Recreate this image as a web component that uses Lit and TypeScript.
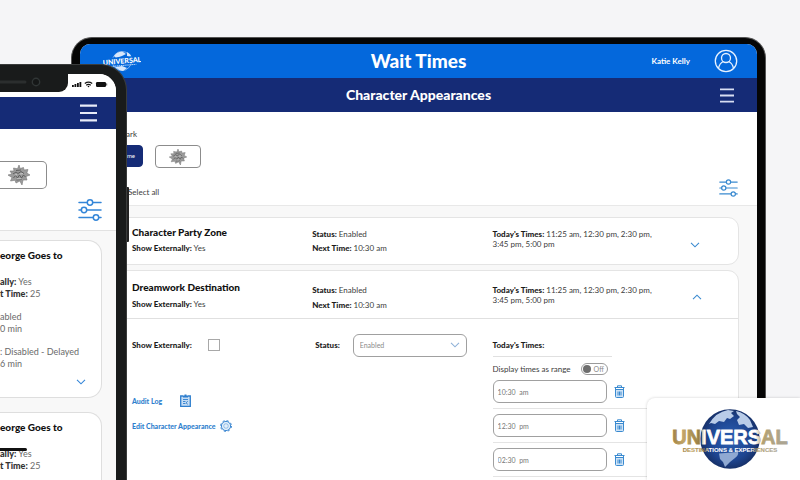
import { LitElement, html, svg, css } from "lit";
import { customElement } from "lit/decorators.js";

const chevronDown = svg`<svg viewBox="0 0 10 6" width="10" height="6" aria-hidden="true"><path d="M1 .8 5 4.8 9 .8" fill="none" stroke="currentColor" stroke-width="1.1"/></svg>`;
const chevronUp = svg`<svg viewBox="0 0 10 6" width="10" height="6" aria-hidden="true"><path d="M1 5.2 5 1.2 9 5.2" fill="none" stroke="currentColor" stroke-width="1.1"/></svg>`;

const sliders = (w: number, h: number) => html`<svg viewBox="0 0 24 22" width=${w} height=${h} aria-hidden="true">
  <g fill="none" stroke="currentColor" stroke-width="1.5" stroke-linecap="round">
    <path d="M1 3.5h8M15 3.5h8M1 11h2.500M9 11h14M1 18.500h14M21 18.500h2"/>
    <circle cx="12" cy="3.500" r="2.700"/><circle cx="6" cy="11" r="2.700"/><circle cx="18" cy="18.500" r="2.700"/>
  </g></svg>`;

const bars = (w: number, h: number) => html`<svg viewBox="0 0 17 17" width=${w} height=${h} preserveAspectRatio="none" aria-hidden="true">
  <path d="M0 1.500h17M0 8.500h17M0 15.500h17" stroke="currentColor" stroke-width="2"/></svg>`;

const parkMark = (w: number, h: number) => html`<svg viewBox="0 0 22 20" width=${w} height=${h} aria-hidden="true">
  <path d="M11 0 12.200 3.500 15.500 2.500 16 5 20 4.500 18.800 8 22 10 18 11.500 19 15 15 15 14 20 11.800 16 8 18 7 15.200 2.500 16 4 12.500 0 10 4 9 2 6 6 6 5.500 3 9.500 3.800z" fill="#9b9b9b" stroke="#777" stroke-width=".6"/>
  <path d="M5 9 8 7 10 8.500 13 6.500 16 8.500M5.500 13l2-2.500 2 2.500 2-3 2 3 2-3 2 2M8 5.500l5-.5M8.500 15l5-.5" fill="none" stroke="#585858" stroke-width=".9"/>
  <path d="M7 10 9 9.500M12 9l3-.5M9 13.800h4" fill="none" stroke="#d8d8d8" stroke-width=".7"/></svg>`;

const trash = html`<svg viewBox="0 0 11 13" width="11" height="13" aria-hidden="true">
  <path d="M1.500 4.500h8V12h-8z" fill="#cfe3f6"/>
  <path d="M.5 2.500h10M3.500 2.300V.8h4v1.500M1.500 3v8.500q0 1 1 1h6q1 0 1-1V3M1.500 4.500h8M4 6.500v4M5.500 6.500v4M7 6.500v4" fill="none" stroke="currentColor" stroke-width="1"/></svg>`;

const clipboard = html`<svg viewBox="0 0 11 13" width="11" height="13" aria-hidden="true">
  <path d="M.7 2h9.600v10.300H.7z" fill="#c6ddf4"/>
  <path d="M3 2H.7v10.300h9.600V2H8" fill="none" stroke="currentColor" stroke-width="1.300"/>
  <path d="M3 3.500V1.500h1.500V.4h2v1.100H8v2z" fill="currentColor"/>
  <path d="M3 5.500h5M3 7.500h2.500M3 9.500h2.500M7.800 7.200 6 8.800l1.800 1.500" fill="none" stroke="currentColor" stroke-width=".9"/></svg>`;

const gear = html`<svg viewBox="0 0 12 12" width="12" height="12" aria-hidden="true">
  <circle cx="6" cy="6" r="4.600" fill="#e3effa" stroke="currentColor" stroke-width=".9"/>
  <circle cx="6" cy="6" r="5.400" fill="none" stroke="currentColor" stroke-width="1" stroke-dasharray="2.120 2.120"/>
  <circle cx="6" cy="6" r="2.300" fill="none" stroke="currentColor" stroke-width=".7" opacity=".6"/></svg>`;

@customElement("tablet-view")
class TabletView extends LitElement {
  static styles = css`
    :host { display: block; background: #fff; color: #3c3c3c; font-size: 8px; line-height: 10px; }
    * { box-sizing: border-box; }
    h1, h2, h3, p { margin: 0; }
    b { font-weight: 900; color: #1c1c1c; }
    button { border: 0; padding: 0; background: none; font: inherit; color: #3a8ad0; display: flex; }
    .bar { display: grid; grid-template-columns: 1fr auto 1fr; align-items: center; height: 34px; padding: 0 19px; color: #fff; }
    .top { background: #0468dc; }
    .logo { margin-left: 4px; }
    .sub { background: #152b76; padding: 0 23px; }
    .top h1 { font-size: 19px; line-height: 24px; font-weight: 900; }
    .sub h2 { font-size: 14px; line-height: 20px; font-weight: 900; grid-column: 2; }
    .user { display: flex; align-items: center; justify-content: flex-end; gap: 24px; font-weight: 700; }
    .sub button { color: #d8def2; justify-self: end; }
    .filters { padding: 17px 19px 8px 48px; border-bottom: 1px solid #e8e8e8; height: 94px; }
    .filters > div:first-child { margin-left: -2px; }
    .parks { display: flex; gap: 12px; margin: 6px 0 0 -31px; }
    .park { height: 23px; width: 46px; border: 1px solid #8c8c8c; border-radius: 4px; align-items: center; justify-content: center; }
    .park.on { background: #152b76; border-color: #152b76; color: #fff; font-size: 6px; height: 22px; padding-left: 22px; }
    .row { display: flex; justify-content: space-between; align-items: end; margin-top: 11px; }
    .list { background: #f8f8f8; padding: 11px 18px 0 24px; }
    .card { background: #fff; border: 1px solid #e4e4e4; border-radius: 11px; margin-bottom: 5px; }
    .cols { display: grid; grid-template-columns: 3fr 3fr 4fr; padding: 0 5px 0 27px; }
    .head { height: 46px; padding-top: 8px; }
    .tall { height: 48px; padding-top: 10px; border-bottom: 1px solid #e0e0e0; }
    h3 { font-size: 10px; line-height: 12px; font-weight: 900; color: #111; margin-bottom: 5px; }
    .tall h3 { margin-bottom: 6px; }
    .pair { display: grid; gap: 4px; align-content: start; padding-top: 3px; }
    .tall .pair { gap: 5px; padding-top: 4px; }
    .times { display: flex; justify-content: space-between; padding: 3px 33px 0 0; }
    .tall .times { padding: 4px 31px 0 0; }
    .times p { width: 172px; }
    .times button { margin-top: 13px; align-self: start; }
    .tall .times button { margin-top: 9px; }
    .body { padding-top: 14px; height: 180px; }
    .field { display: flex; align-items: center; height: 24px; }
    .box { appearance: none; margin: 0 0 0 16px; width: 12px; height: 12px; border: 1px solid #a8a8a8; background: #fff; }
    .pick { position: relative; margin-left: 13px; display: flex; align-items: center; }
    select { appearance: none; font: inherit; font-size: 7px; width: 114px; height: 23px; border: 1px solid #a0a0a0; border-radius: 6px; background: #fff; color: #8a8a8a; padding: 0 6px; }
    .pick svg { position: absolute; right: 7px; color: #8fb2d8; }
    .links { display: grid; gap: 12px; margin-top: 37px; }
    .links a { color: #2f7fce; text-decoration: none; font-size: 7px; font-weight: 900; display: flex; align-items: center; gap: 4px; height: 13px; }
    .links .log { gap: 18px; }
    .status { padding-left: 3px; }
    .range { display: flex; align-items: center; gap: 10px; height: 24px; border-top: 1px solid #e0e0e0; width: 119px; white-space: nowrap; margin-top: -1px; }
    .switch { display: flex; align-items: center; gap: 3px; width: 27px; height: 12px; border: 1px solid #9a9a9a; border-radius: 6px; padding: 0 1px; color: #8a8a8a; font-size: 7px; flex: none; }
    .switch input { appearance: none; margin: 0; width: 8px; height: 8px; border-radius: 50%; background: #6e6e6e; }
    .slot { display: flex; align-items: center; gap: 7px; height: 34px; padding: 5px 0; border-bottom: 1px solid #e4e4e4; }
    .range + .slot { padding-top: 0; height: 29px; }
    .slot input { font: inherit; font-size: 7px; width: 114px; height: 23px; border: 1px solid #a0a0a0; border-radius: 6px; color: #777; padding: 0 4px; background: #fff; }
  `;

  private card(name: string, open: boolean) {
    return html`<div class="cols head ${open ? "tall" : ""}">
      <div><h3>${name}</h3><p><b>Show Externally:</b> Yes</p></div>
      <div class="pair"><p><b>Status:</b> Enabled</p><p><b>Next Time:</b> 10:30 am</p></div>
      <div class="times"><p><b>Today's Times:</b> 11:25 am, 12:30 pm, 2:30 pm, 3:45 pm, 5:00 pm</p>
        <button aria-label=${open ? "Collapse" : "Expand"}>${open ? chevronUp : chevronDown}</button></div>
    </div>`;
  }

  render() {
    return html`
      <header class="bar top">
        <svg class="logo" viewBox="0 0 38 24" width="38" height="24" role="img" aria-label="Universal">
          <circle cx="19" cy="12" r="9.500" fill="none" stroke="#9cc4f3" stroke-width=".8"/>
          <path d="M11 7Q15 2 20 3l3 2-4 2-6 2zM24 3q4 2 5 6l-5-2zM12 18l7-1 5 2-4 3q-5-1-8-4z" fill="#d6e7fb"/>
          <g transform="rotate(-5 19 12)"><rect x="1" y="8" width="36" height="7" fill="#0468dc"/>
          <text x="19" y="14.500" text-anchor="middle" font-family="Lato, sans-serif" font-weight="900" font-size="7" fill="#fff">UNIVERSAL</text>
          <path d="M5 16.500h28" stroke="#b9d6f7" stroke-width="1" stroke-dasharray="1.500 .6"/></g>
        </svg>
        <h1>Wait Times</h1>
        <div class="user"><span>Katie Kelly</span>
          <svg viewBox="0 0 24 24" width="24" height="24" aria-hidden="true"><g fill="none" stroke="#e6f1ff" stroke-width="1.300">
            <circle cx="12" cy="12" r="10.700"/><circle cx="12" cy="9" r="4.500"/><path d="M4.500 19.500q1-5.500 5-7M19.500 19.500q-1-5.500-5-7"/></g></svg>
        </div>
      </header>
      <div class="bar sub"><h2>Character Appearances</h2><button aria-label="Menu">${bars(14, 15)}</button></div>
      <section class="filters">
        <div>ark</div>
        <div class="parks"><button class="park on">me</button><button class="park" aria-label="Park">${parkMark(18, 16)}</button></div>
        <div class="row"><span>Select all</span><button aria-label="Filters">${sliders(19, 18)}</button></div>
      </section>
      <section class="list">
        <article class="card">${this.card("Character Party Zone", false)}</article>
        <article class="card">${this.card("Dreamwork Destination", true)}
          <div class="cols body">
            <div>
              <div class="field"><label for="show"><b>Show Externally:</b></label><input id="show" class="box" type="checkbox"></div>
              <div class="links"><a class="log" href="#log">Audit Log ${clipboard}</a><a href="#edit">Edit Character Appearance ${gear}</a></div>
            </div>
            <div><div class="field status"><label for="status"><b>Status:</b></label>
              <span class="pick"><select id="status"><option>Enabled</option></select>${chevronDown}</span></div></div>
            <div>
              <div class="field"><b>Today's Times:</b></div>
              <div class="range"><span>Display times as range</span><label class="switch"><input type="checkbox" aria-label="Display times as range">Off</label></div>
              ${["10:30  am", "12:30  pm", "02:30  pm"].map(t => html`<div class="slot"><input aria-label="Time" .value=${t}><button aria-label="Delete">${trash}</button></div>`)}
            </div>
          </div>
        </article>
      </section>`;
  }
}

@customElement("phone-view")
class PhoneView extends LitElement {
  static styles = css`
    :host { display: block; background: #f8f8f8; color: #6a6a6a; font-size: 9px; line-height: 12px; }
    * { box-sizing: border-box; }
    h3, p { margin: 0; }
    b { font-weight: 900; color: #333; }
    button { border: 0; padding: 0; background: none; color: #3486d8; display: flex; }
    .island { display: flex; height: 23px; background: #fff; }
    .notch { width: 68px; height: 18px; background: #191b1b; border-radius: 0 0 9px 0; }
    .signals { margin: 7px 0 0 4px; }
    .nav { background: #152b76; height: 32px; display: flex; justify-content: flex-end; align-items: center; padding-right: 19px; }
    .nav button { color: #e8ecf8; }
    .filters { background: #fff; height: 102px; border-bottom: 1px solid #e2e2e2; padding: 32px 14px 0 0; }
    .park { width: 47px; height: 28px; border: 1px solid #8c8c8c; border-left: 0; border-radius: 0 5px 5px 0; align-items: center; padding-left: 8px; }
    .tools { display: flex; justify-content: flex-end; margin-top: 10px; }
    .card { background: #fff; border: 1px solid #dedede; border-left: 0; border-radius: 0 14px 14px 0; margin: 9px 14px 0 0; height: 158px; padding-top: 7px; position: relative; white-space: nowrap; }
    .card + .card { margin-top: 14px; }
    h3 { font-size: 10px; line-height: 14px; font-weight: 900; color: #111; margin-bottom: 14px; }
    .gap { margin-top: 11px; }
    .more { position: absolute; right: 15px; bottom: 12px; }
  `;

  private summary() {
    return html`<h3>eorge Goes to</h3><p><b>ally:</b> Yes</p><p><b>t Time:</b> 25</p>`;
  }

  render() {
    return html`
      <div class="island">
        <div class="notch"><svg viewBox="0 0 68 18" width="68" height="18" aria-hidden="true">
          <path d="M0 8h25" stroke="#2b2e2e" stroke-width="3" stroke-linecap="round"/><circle cx="36" cy="8" r="3.700" fill="#151717" stroke="#303535" stroke-width="1.400"/></svg></div>
        <svg class="signals" viewBox="0 0 36 7" width="36" height="7" aria-hidden="true">
          <path d="M0 4h1.800v2H0zM2.500 3h1.800v3H2.500zM5 2h1.800v4H5zM7.500 1h1.800v5H7.500z" fill="#111"/>
          <path d="M12.800 2.500q3.700-2.700 7.400 0M14.200 4.200q2.300-1.600 4.600 0" fill="none" stroke="#111" stroke-width="1.200"/><circle cx="16.500" cy="5.500" r=".8" fill="#111"/>
          <rect x="24" y="1" width="10" height="5" rx="1.200" fill="#111"/><path d="M34.700 2.500v2" stroke="#111" stroke-width=".7"/></svg>
      </div>
      <div class="nav"><button aria-label="Menu">${bars(17, 18)}</button></div>
      <div class="filters"><button class="park" aria-label="Park">${parkMark(22, 20)}</button>
        <div class="tools"><button aria-label="Filters">${sliders(24, 22)}</button></div></div>
      <article class="card">${this.summary()}
        <p class="gap">abled</p><p>0 min</p>
        <p class="gap">: Disabled - Delayed</p><p>6 min</p>
        <button class="more" aria-label="Expand">${chevronDown}</button></article>
      <article class="card">${this.summary()}</article>`;
  }
}

@customElement("app-root")
class AppRoot extends LitElement {
  static styles = css`
    :host { display: block; position: relative; height: 100vh; overflow: hidden; background: #f5f5f7; font-family: Lato, "Open Sans", sans-serif; }
    * { box-sizing: border-box; }
    .tablet { margin: 37px 34px 0 71px; border: 1px solid #555; border-bottom: 0; border-radius: 21px 21px 0 0; padding: 6px 8px 0; background: #050505; }
    .tablet tablet-view { border-radius: 10px 10px 0 0; overflow: hidden; }
    .phone { position: absolute; left: 0; top: 64px; width: 127px; height: calc(100% - 64px); background: #191b1b; border: 1px solid #3a3c3c; border-width: 1px 1px 0 0; border-radius: 0 26px 0 0; padding: 9px 10px 0 0; }
    .phone phone-view { height: 100%; border-radius: 0 17px 0 0; overflow: hidden; }
    .key { position: absolute; left: 127px; top: 187px; width: 2px; height: 55px; background: #222; border-radius: 0 1px 1px 0; }
    .home { position: absolute; left: 0; top: 448px; width: 27px; height: 3px; border-radius: 0 2px 2px 0; background: #111; }
    .brand { position: absolute; right: 0; bottom: 0; width: 153px; height: 82px; background: #fff; border-radius: 8px 0 0 0; box-shadow: 0 0 3px #00000030; padding: 8px 0 0 23px; }
  `;

  render() {
    return html`
      <main class="tablet"><tablet-view></tablet-view></main>
      <div class="phone"><phone-view></phone-view></div>
      <div class="key"></div><div class="home"></div>
      <aside class="brand">
        <svg viewBox="0 0 120 64" width="120" height="64" role="img" aria-label="Universal Destinations &amp; Experiences">
          <defs>
            <radialGradient id="sea" cx=".5" cy=".5" r=".55"><stop offset="0" stop-color="#2a5fb4"/><stop offset=".65" stop-color="#1e4590"/><stop offset="1" stop-color="#142a5c"/></radialGradient>
            <linearGradient id="gold" x1="0" x2="1"><stop offset="0" stop-color="#a08245"/><stop offset=".1" stop-color="#c2a566"/><stop offset=".23" stop-color="#9a8046"/><stop offset=".28" stop-color="#fff"/><stop offset=".72" stop-color="#fff"/><stop offset=".78" stop-color="#b5a271"/><stop offset="1" stop-color="#aaa598"/></linearGradient>
          </defs>
          <circle cx="60" cy="33" r="29.700" fill="url(#sea)"/>
          <path d="M39 18Q46 6 58 4l6 1-3 2 3 3-4 3-3-1-3 4-5-1-4 3-4-1zM66 5q9 2 14 9l3 7-5 1-4-4-5 1-2-5 3-3-3-3z" fill="#b9cce8"/>
          <path d="M49 47.500 68 46q1 3-3 6l-5 4-5 5-2-5-3-3z" fill="#8fa9d2"/>
          <text x="60" y="38" text-anchor="middle" font-family="Liberation Sans, sans-serif" font-weight="700" font-size="20" fill="url(#gold)" stroke="url(#gold)" stroke-width=".8">UNIVERSAL</text>
          <text x="60" y="46" text-anchor="middle" font-family="Liberation Sans, sans-serif" font-weight="700" font-size="6" fill="url(#gold)" stroke="url(#gold)" stroke-width=".1">DESTINATIONS &amp; EXPERIENCES</text>
        </svg>
      </aside>`;
  }
}
